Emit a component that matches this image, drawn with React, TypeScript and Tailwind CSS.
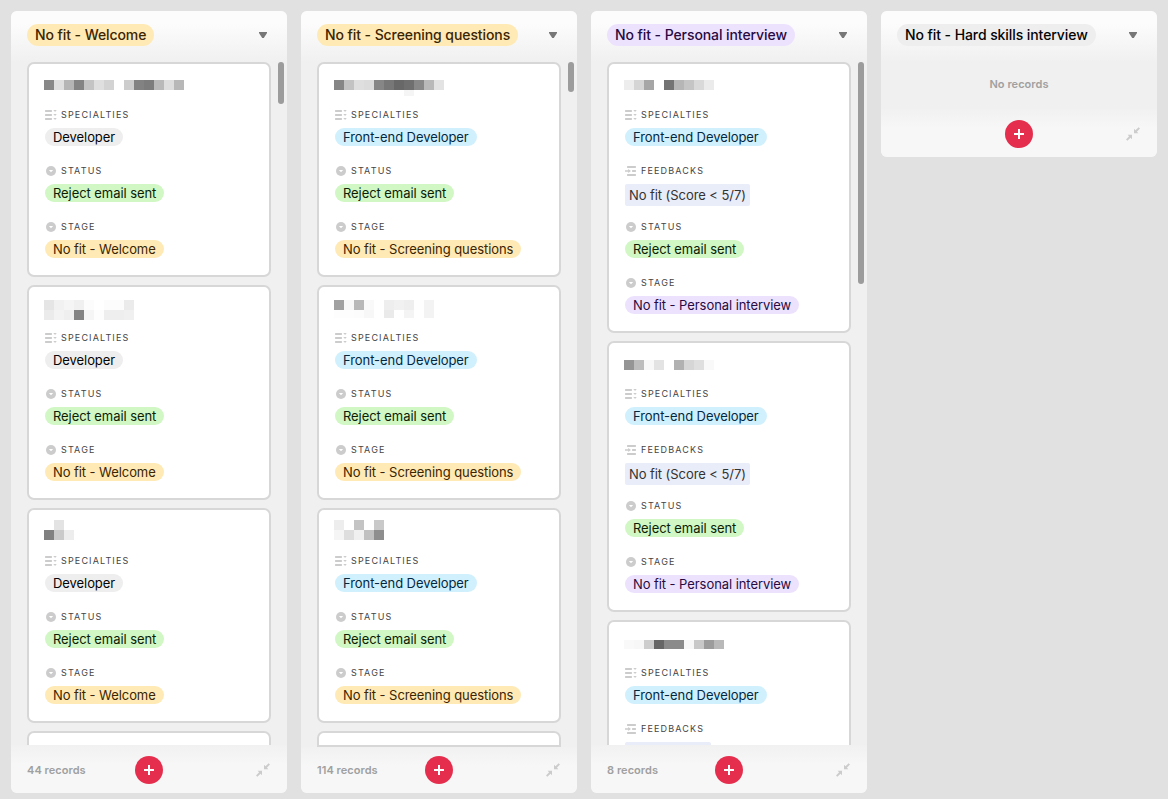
type Tone = 'gray' | 'blue' | 'green' | 'yellow' | 'purple';
type Block = [x: number, y: number, color: string, height?: number];
type Field = { label: string; kind: 'multi' | 'select' | 'link'; value: string; tone?: Tone };
type Record = { blocks: Block[]; fields: Field[] };

const tones: { [key in Tone]: string } = {
  gray: 'bg-[#eeeeee] text-[#040404]',
  blue: 'bg-[#d0f0fd] text-[#04283f]',
  green: 'bg-[#d1f7c4] text-[#0b1d05]',
  yellow: 'bg-[#ffeab6] text-[#3b2501]',
  purple: 'bg-[#ede2fe] text-[#280b42]',
};

function row(y: number, start: number, colors: string[], height = 10): Block[] {
  return colors.flatMap((c, i): Block[] => (c ? [[start + i * 10, y, c, height]] : []));
}

const status: Field = { label: 'STATUS', kind: 'select', value: 'Reject email sent', tone: 'green' };
const frontEnd: Field = { label: 'SPECIALTIES', kind: 'multi', value: 'Front-end Developer', tone: 'blue' };

const welcome: Field[] = [
  { label: 'SPECIALTIES', kind: 'multi', value: 'Developer', tone: 'gray' },
  status,
  { label: 'STAGE', kind: 'select', value: 'No fit - Welcome', tone: 'yellow' },
];
const screening: Field[] = [
  frontEnd,
  status,
  { label: 'STAGE', kind: 'select', value: 'No fit - Screening questions', tone: 'yellow' },
];
const personal: Field[] = [
  frontEnd,
  { label: 'FEEDBACKS', kind: 'link', value: 'No fit (Score < 5/7)' },
  status,
  { label: 'STAGE', kind: 'select', value: 'No fit - Personal interview', tone: 'purple' },
];

const welcomeRecords: Record[] = [
  {
    fields: welcome,
    blocks: row(16, 0, ['#888', '#dfdfdf', '#b5b5b5', '#848484', '#c4c4c4', '#dfdfdf', '#d3d3d3', '', '#cdcdcd', '#828282', '#7c7c7c', '#b9b9b9', '#dedede', '#b8b8b8']),
  },
  {
    fields: welcome,
    blocks: [
      ...row(13, 0, ['#e5e5e5', '#f1f1f1', '#f5f5f5', '#f0f0f0', '#fcfcfc', '', '#fcfcfc', '#fcfcfc', '#ebebeb']),
      ...row(23, 0, ['#ebebeb', '#f3f3f3', '#efefef', '#838383', '#f5f5f5', '#fdfdfd', '#eeeeee', '#eeeeee', '#f0f0f0']),
    ],
  },
  { fields: welcome, blocks: [...row(10, 10, ['#e3e3e3']), ...row(20, 0, ['#808080', '#cacaca', '#ededed'])] },
];
const screeningRecords: Record[] = [
  {
    fields: screening,
    blocks: [
      ...row(16, 0, ['#868686', '#c3c3c3', '#dfdfdf', '#dcdcdc', '#868686', '#777', '#686868', '#6f6f6f', '#888', '#b9b9b9', '#e3e3e3']),
      ...row(26, 70, ['#f5f5f5'], 6),
    ],
  },
  {
    fields: screening,
    blocks: [
      ...row(13, 0, ['#a1a1a1', '#f8f8f8', '#b8b8b8', '#f9f9f9', '', '#eeeeee', '#f1f1f1', '#eeeeee', '#fefefe', '#f3f3f3']),
      ...row(23, 0, ['#fdfdfd', '#fdfdfd', '#fcfcfc', '#f7f7f7', '', '#eaeaea', '', '#f4f4f4', '', '#f3f3f3'], 8),
    ],
  },
  {
    fields: screening,
    blocks: [
      ...row(10, 0, ['#ededed', '', '#c4c4c4', '', '#c9c9c9']),
      ...row(20, 0, ['#f5f5f5', '#dedede', '#f0f0f0', '#c0c0c0', '#8e8e8e']),
    ],
  },
];
const personalRecords: Record[] = [
  { fields: personal, blocks: row(16, 0, ['#ededed', '#d5d5d5', '#a6a6a6', '', '#747474', '#b6b6b6', '#c5c5c5', '#d9d9d9', '#ebebeb']) },
  { fields: personal, blocks: row(17, 0, ['#959595', '#bdbdbd', '#f8f8f8', '#e3e3e3', '', '#b1b1b1', '#d6d6d6', '#dfdfdf', '#f9f9f9']) },
  {
    fields: [frontEnd, { label: 'FEEDBACKS', kind: 'link', value: '' }],
    blocks: row(18, 0, ['#f9f9f9', '#f7f7f7', '#cdcdcd', '#666', '#8a8a8a', '#8a8a8a', '#f7f7f7', '#c8c8c8', '#9c9c9c', '#b9b9b9'], 9),
  },
];

function FieldIcon({ kind }: { kind: Field['kind'] }) {
  return (
    <svg width="12" height="12" viewBox="0 0 12 12" className="shrink-0" fill="#cccccc">
      {kind === 'multi' && (
        <>
          <rect y="1.1" width="7" height="1.8" rx="0.6" />
          <rect y="5.1" width="7" height="1.8" rx="0.6" />
          <rect y="9.1" width="7" height="1.8" rx="0.6" />
          <path d="M8.3 1h3.5l-1.75 2zM8.3 5h3.5l-1.75 2zM8.3 9h3.5l-1.75 2z" />
        </>
      )}
      {kind === 'select' && (
        <>
          <circle cx="6" cy="6" r="5" />
          <path d="M3.9 5h4.2L6 7.3z" fill="#fff" />
        </>
      )}
      {kind === 'link' && (
        <>
          <rect x="2" y="1.1" width="9" height="1.8" rx="0.6" />
          <rect x="7" y="5.1" width="4" height="1.8" rx="0.6" />
          <rect x="2" y="9.1" width="9" height="1.8" rx="0.6" />
          <path d="M0 5.2h3.2V4L6 6 3.2 8V6.8H0z" />
        </>
      )}
    </svg>
  );
}

function RecordCard({ record }: { record: Record }) {
  return (
    <article className="shrink-0 rounded-[7px] border-2 border-[#d7d7d7] bg-white px-4">
      <svg width="200" height="43" className="-ml-px block" shapeRendering="crispEdges">
        {record.blocks.map(([x, y, color, height]) => (
          <rect key={`${x}-${y}`} x={x} y={y} width="10" height={height} fill={color} />
        ))}
      </svg>
      {record.fields.map((f) => (
        <div key={f.label} className="h-14">
          <div className="flex h-4 items-center gap-1">
            <FieldIcon kind={f.kind} />
            <span className="text-[9px] leading-4 tracking-[1.15px] text-[#444444]">{f.label}</span>
          </div>
          <div className="mt-[5px] flex">
            {f.tone ? (
              <span className={`h-[18px] rounded-full px-2 text-[13px] leading-[19px] tracking-[-0.07px] whitespace-nowrap ${tones[f.tone]}`}>{f.value}</span>
            ) : (
              <span className="h-[22px] min-w-[86px] rounded-[2px] bg-[#e9edf9] px-1 text-[13px] leading-[23px] tracking-[-0.07px] whitespace-nowrap text-[#333333]">{f.value}</span>
            )}
          </div>
        </div>
      ))}
    </article>
  );
}

function Header({ title, tone }: { title: string; tone: Tone }) {
  return (
    <header className="flex h-[51px] shrink-0 items-start justify-between bg-linear-to-b from-[#fcfcfc] from-25% to-[#f0f0f0] pt-[13px] pr-5 pl-4">
      <h2 className={`h-[22px] rounded-full px-2 text-sm leading-[22px] font-medium tracking-[-0.08px] whitespace-nowrap ${tones[tone]}`}>{title}</h2>
      <svg width="8" height="22" viewBox="0 0 8 22" fill="#777777">
        <path d="M0 8h8v1L4.8 14H3.2L0 9z" />
      </svg>
    </header>
  );
}

function Footer({ count, height = 'h-12' }: { count: string; height?: string }) {
  return (
    <footer className={`mt-auto grid shrink-0 grid-cols-3 items-end bg-linear-to-b from-[#f1f1f1] to-[#f7f7f7] to-40% px-4 pb-[9px] ${height}`}>
      <span className="text-[11px] leading-7 font-semibold tracking-[0.05px] whitespace-nowrap text-[#a0a0a0]">{count}</span>
      <button className="flex size-7 items-center justify-center justify-self-center rounded-full bg-[#e52e4d]" aria-label="Add record">
        <svg width="10" height="10" viewBox="0 0 10 10" stroke="#fff" strokeWidth="2">
          <path d="M5 0v10M0 5h10" />
        </svg>
      </button>
      <button className="flex h-7 w-4 items-center justify-center justify-self-end" aria-label="Collapse">
        <svg width="14" height="14" viewBox="0 0 14 14" fill="#cccccc">
          <path d="M8 1.8v4.4h4.4l-1.5-1.5L14 1.6 12.6.2 9.5 3.3zM6 12.2V7.8H1.6l1.5 1.5L0 12.4l1.4 1.4 3.1-3.1z" />
        </svg>
      </button>
    </footer>
  );
}

type ColumnProps = { title: string; tone: Tone; count: string; records: Record[]; thumb: string; peek?: 'open' | 'closed' };

function Column({ title, tone, count, records, thumb, peek }: ColumnProps) {
  const closed = peek === 'closed';
  return (
    <section className="flex h-[782px] w-[276px] shrink-0 flex-col overflow-hidden rounded-md bg-[#f0f0f0]">
      <Header title={title} tone={tone} />
      <div className={`flex shrink-0 overflow-hidden pl-4 ${closed ? 'h-[685px]' : 'h-[683px]'}`}>
        <div className="flex w-[244px] shrink-0 flex-col gap-2">
          {records.map((r, i) => (
            <RecordCard key={i} record={r} />
          ))}
          {peek && (
            <div className={`shrink-0 rounded-t-[7px] border-2 border-[#d7d7d7] bg-white ${closed ? 'h-4' : 'h-10'}`} />
          )}
        </div>
        <div className={`ml-[7px] w-1.5 shrink-0 rounded-full bg-[#9c9c9c] ${thumb}`} />
      </div>
      <Footer count={count} height={closed ? 'h-[46px]' : 'h-12'} />
    </section>
  );
}

export default function App() {
  return (
    <main className="flex h-[799px] w-[1168px] items-start gap-3.5 overflow-hidden bg-[#e1e1e1] p-[11px] font-['Inter',sans-serif]">
      <Column title="No fit - Welcome" tone="yellow" count="44 records" records={welcomeRecords} thumb="h-[42px]" peek="open" />
      <Column title="No fit - Screening questions" tone="yellow" count="114 records" records={screeningRecords} thumb="h-[30px]" peek="closed" />
      <Column title="No fit - Personal interview" tone="purple" count="8 records" records={personalRecords} thumb="h-[222px]" />
      <section className="flex h-[146px] w-[276px] shrink-0 flex-col overflow-hidden rounded-md bg-[#f0f0f0]">
        <Header title="No fit - Hard skills interview" tone="gray" />
        <p className="pt-3.5 text-center text-[11px] leading-4 font-semibold tracking-[0.05px] text-[#a0a0a0]">No records</p>
        <Footer count="" />
      </section>
    </main>
  );
}
